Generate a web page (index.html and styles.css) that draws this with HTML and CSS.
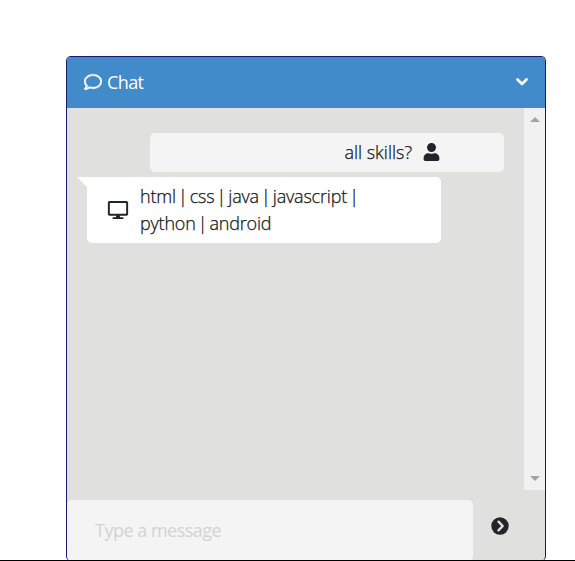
FILE: index.html
```html
<!DOCTYPE html>
<html lang="en">
<head>
<meta charset="utf-8">
<title>Chat</title>
<link rel="stylesheet" href="styles.css">
</head>
<body>
<main class="chat">
  <header class="chat-header">
    <svg class="icon-comment" viewBox="0 0 512 512"><path d="M256 32C114.600 32 0 125.100 0 240c0 47.600 19.900 91.200 52.900 126.300C38 405.700 7 439.100 6.500 439.500c-6.600 7-8.400 17.200-4.600 26S14.400 480 24 480c61.500 0 110-25.700 139.100-46.300C192 442.800 223.200 448 256 448c141.400 0 256-93.100 256-208S397.400 32 256 32zm0 368c-26.700 0-53.100-4.100-78.400-12.100l-22.700-7.200-19.500 13.800c-14.300 10.100-33.900 21.400-57.500 29 7.300-12.100 14.400-25.700 19.900-40.200l10.600-28.100-20.600-21.800C69.700 314.100 48 282.200 48 240c0-88.200 93.300-160 208-160s208 71.800 208 160-93.300 160-208 160z"/></svg>
    <span class="title">Chat</span>
    <svg class="icon-chevron" viewBox="0 0 12 8"><path d="M1.500 1.500 6 6l4.500-4.500"/></svg>
  </header>
  <section class="chat-body">
    <div class="messages">
      <div class="message sent">
        <span class="sent-text">all skills?</span>
        <svg class="icon-user" viewBox="0 0 448 512"><path d="M224 256c70.700 0 128-57.300 128-128S294.700 0 224 0 96 57.300 96 128s57.300 128 128 128zm89.600 32h-16.700c-22.200 10.200-46.900 16-72.900 16s-50.600-5.800-72.900-16h-16.700C60.200 288 0 348.200 0 422.400V464c0 26.500 21.500 48 48 48h352c26.500 0 48-21.500 48-48v-41.600c0-74.200-60.200-134.400-134.400-134.400z"/></svg>
      </div>
      <div class="message received">
        <svg class="icon-desktop" viewBox="0 0 576 512"><path d="M528 0H48C21.500 0 0 21.500 0 48v320c0 26.500 21.500 48 48 48h192l-16 48h-72c-13.300 0-24 10.700-24 24s10.700 24 24 24h272c13.300 0 24-10.700 24-24s-10.700-24-24-24h-72l-16-48h192c26.500 0 48-21.500 48-48V48c0-26.500-21.500-48-48-48zm-8 360H56V56h464v304z"/></svg>
        <p class="received-text"><span>html | css | java | javascript |</span><br><span>python | android</span></p>
      </div>
    </div>
    <div class="scrollbar">
      <svg viewBox="0 0 10 5"><path d="M0 5 5 0l5 5z"/></svg>
      <svg viewBox="0 0 10 5"><path d="M0 0h10L5 5z"/></svg>
    </div>
  </section>
  <footer class="composer">
    <div class="input"><span class="placeholder">Type a message</span></div>
    <svg class="icon-send" viewBox="0 0 18 18"><circle cx="9" cy="9" r="8.700"/><path d="m7.500 4.700 4.200 4.300-4.200 4.300"/></svg>
  </footer>
</main>
</body>
</html>
```
FILE: styles.css
```css
* { box-sizing: border-box; }
body {
  margin: 0;
  height: 561px;
  padding: 56px 29px 0 66px;
  overflow: hidden;
  border-bottom: 1px solid #000;
  background: #fff;
  color: #212529;
  font-family: "Open Sans", "Noto Sans", sans-serif;
  font-size: 18px;
  font-weight: 300;
}
svg { display: block; flex: none; fill: currentColor; }
span { white-space: nowrap; }
.chat {
  height: 505px;
  border: 1px solid #191970;
  border-radius: 5px;
  border-bottom: 0;
  overflow: hidden;
  background: #e0e0de;
}
.chat-header {
  display: flex;
  align-items: center;
  height: 51px;
  padding: 0 17px 2px;
  background: #428bca;
  color: #fff;
  font-weight: 400;
}
.icon-comment { width: 18px; height: 18px; }
.icon-comment path { stroke: #fff; stroke-width: 10; }
.title { margin-left: 5px; letter-spacing: -0.6px; }
.icon-chevron { width: 12px; height: 8px; margin-left: auto; fill: none; stroke: #fff; stroke-width: 2.700; stroke-linecap: round; stroke-linejoin: round; }
.chat-body { display: flex; height: 382px; }
.messages { width: 457px; padding: 25px 20px 0; }
.message { display: flex; width: 354px; border-radius: 5px; }
.sent {
  height: 39px;
  margin-left: auto;
  padding-right: 64px;
  align-items: center;
  justify-content: flex-end;
  background: #f4f4f4;
}
.sent-text, .received-text { color: #111518; -webkit-text-stroke: 0.25px #111518; }
.sent-text { padding-bottom: 2px; }
.icon-user { width: 17px; height: 18px; margin: -1px 0 0 11px; }
.received {
  position: relative;
  height: 66px;
  margin-top: 5px;
  padding-left: 20px;
  align-items: center;
  border-top-left-radius: 0;
  background: #fff;
}
.received::before {
  content: "";
  position: absolute;
  top: 0;
  left: -10px;
  border-top: 10px solid #fff;
  border-left: 10px solid transparent;
}
.icon-desktop { width: 22px; height: 18px; margin-top: -1px; }
.received-text { margin: 0 0 0 11px; line-height: 27px; letter-spacing: -0.2px; word-spacing: -2.3px; }
.scrollbar {
  display: flex;
  flex-direction: column;
  justify-content: space-between;
  align-items: center;
  width: 21px;
  padding: 9px 0;
  background: #f1f1f1;
  color: #a3a3a3;
}
.scrollbar svg { width: 10px; height: 5px; }
.composer { display: flex; height: 71px; padding-top: 10px; }
.input {
  display: flex;
  align-items: center;
  width: 406px;
  height: 61px;
  padding: 0 0 1px 28px;
  border-radius: 5px;
  background: #f4f4f4;
  color: #d3d3d3;
  font-weight: 400;
}
.placeholder { letter-spacing: -0.5px; }
.icon-send { width: 18px; height: 18px; margin: 17px 0 0 18px; }
.icon-send path { fill: none; stroke: #e0e0de; stroke-width: 2.400; stroke-linecap: round; stroke-linejoin: round; }
```
